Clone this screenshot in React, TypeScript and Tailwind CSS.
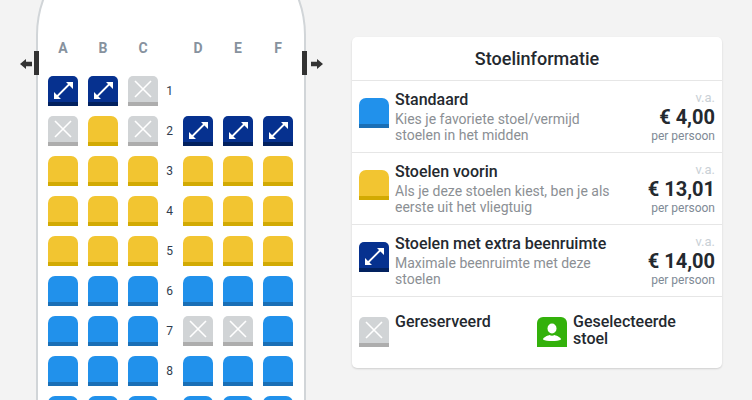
type SeatKind = "blue" | "yellow" | "navy" | "taken" | "selected" | "none";

const B: SeatKind = "blue";
const Y: SeatKind = "yellow";
const N: SeatKind = "navy";
const X: SeatKind = "taken";
const E: SeatKind = "none";

const rows: SeatKind[][] = [
  [N, N, X, E, E, E],
  [X, Y, X, N, N, N],
  [Y, Y, Y, Y, Y, Y],
  [Y, Y, Y, Y, Y, Y],
  [Y, Y, Y, Y, Y, Y],
  [B, B, B, B, B, B],
  [B, B, B, X, X, B],
  [B, B, B, B, B, B],
  [B, B, B, B, B, B],
];

function StretchIcon() {
  return (
    <svg viewBox="0 0 30 26" className="h-[26px] w-[30px]" fill="none">
      <path d="M9 20.500 21.500 8" stroke="#fff" strokeWidth="1.800" />
      <path d="M18 6h7v7z M6 16v7h7z" fill="#fff" />
    </svg>
  );
}

function CrossIcon() {
  return (
    <svg viewBox="0 0 30 26" className="h-[26px] w-[30px]" fill="none">
      <path d="M7 5 23 21M23 5 7 21" stroke="#fff" strokeWidth="1.600" />
    </svg>
  );
}

function PersonIcon() {
  return (
    <svg viewBox="0 0 30 30" className="h-[30px] w-[30px]" fill="#fff">
      <ellipse cx="15" cy="11.500" rx="4.500" ry="5" />
      <path d="M6 22.500c0-2 3.500-3.500 6.500-4.500 1.500 1 3.500 1 5 0 3 1 6.500 2.500 6.500 4.500-2 1-5 1.500-9 1.500s-7-.5-9-1.500z" />
    </svg>
  );
}

function Seat({ kind }: { kind: SeatKind }) {
  if (kind === "none") return <div className="h-[30px] w-[30px]" />;
  if (kind === "selected") {
    return (
      <div className="h-[30px] w-[30px] shrink-0 overflow-hidden rounded-t-[6px] bg-[#33b10b]">
        <PersonIcon />
      </div>
    );
  }
  if (kind === "blue") {
    return <div className="h-[30px] w-[30px] shrink-0 rounded-t-[7px] border-b-4 border-[#1a6fb6] bg-[#2191eb]" />;
  }
  if (kind === "yellow") {
    return <div className="h-[30px] w-[30px] shrink-0 rounded-t-[7px] border-b-4 border-[#d2aa03] bg-[#f2c531]" />;
  }
  if (kind === "navy") {
    return (
      <div className="h-[30px] w-[30px] shrink-0 overflow-hidden rounded-t-[5px] border-b-4 border-[#02215f] bg-[#06318f]">
        <StretchIcon />
      </div>
    );
  }
  return (
    <div className="h-[30px] w-[30px] shrink-0 overflow-hidden rounded-t-[5px] border-b-4 border-[#adadad] bg-[#d1d4d6]">
      <CrossIcon />
    </div>
  );
}

function ExitMark({ side }: { side: "left" | "right" }) {
  const left = side === "left";
  return (
    <div className={`absolute top-[119px] flex items-center ${left ? "-left-[18px] flex-row" : "-right-[19px] flex-row-reverse"}`}>
      <svg viewBox="0 0 12 12" className={`mt-[2px] h-[12px] w-[12px] ${left ? "" : "rotate-180"}`} fill="#333">
        <path d="M0 6 6 1V3.800h6v4.400H6V11z" />
      </svg>
      <div className={`h-[24px] w-[5px] bg-[#333] ${left ? "ml-[2px]" : "mr-[4px]"}`} />
    </div>
  );
}

function Fuselage() {
  return (
    <div className="relative ml-[36px] -mt-[70px] h-[600px] w-[270px] shrink-0 rounded-t-[105px] border-2 border-[#d1d5d8] bg-white pt-[106px] pl-[10px]">
      <ExitMark side="left" />
      <ExitMark side="right" />
      <div className="mb-[18px] flex text-[14px] font-bold leading-[20px] text-[#87929e]">
        <div className="flex gap-[10px] text-center">
          <span className="w-[30px]">A</span>
          <span className="w-[30px]">B</span>
          <span className="w-[30px]">C</span>
        </div>
        <div className="w-[25px]" />
        <div className="flex gap-[10px] text-center">
          <span className="w-[30px]">D</span>
          <span className="w-[30px]">E</span>
          <span className="w-[30px]">F</span>
        </div>
      </div>
      <div className="flex flex-col gap-[10px]">
        {rows.map((row, i) => (
          <div key={i} className="flex">
            <div className="flex gap-[10px]">
              {row.slice(0, 3).map((s, j) => (
                <Seat key={j} kind={s} />
              ))}
            </div>
            <div className="w-[25px] pr-[2px] text-center text-[12px] leading-[30px] text-[#2f3c4e]">
              {i < 8 ? i + 1 : ""}
            </div>
            <div className="flex gap-[10px]">
              {row.slice(3).map((s, j) => (
                <Seat key={j} kind={s} />
              ))}
            </div>
          </div>
        ))}
      </div>
    </div>
  );
}

function InfoRow({ kind, name, desc, price }: { kind: SeatKind; name: string; desc: string; price: string }) {
  return (
    <div className="flex h-[72px] border-t border-[#e6e6e6] pl-[7px] pr-[7px]">
      <div className="mt-[17px]">
        <Seat kind={kind} />
      </div>
      <div className="ml-[6px] w-[225px] pt-[9px]">
        <div className="text-[16px] font-medium leading-[20px] text-[#24292f]">{name}</div>
        <div className="mt-[1px] text-[14px] leading-[16px] text-[#8b8f94]">{desc}</div>
      </div>
      <div className="ml-auto pt-[9px] text-right">
        <div className="text-[13px] leading-[15px] text-[#c9d0d6]">v.a.</div>
        <div className="text-[20px] font-bold leading-[24px] text-[#24292f]">{price}</div>
        <div className="text-[12px] leading-[14px] text-[#7f8a96]">per persoon</div>
      </div>
    </div>
  );
}

export default function App() {
  return (
    <div className="flex h-[400px] w-[752px] items-start overflow-hidden bg-[#f3f3f3] font-['Roboto',sans-serif]">
      <Fuselage />
      <div className="ml-[46px] mt-[37px] w-[370px] rounded-[5px] bg-white shadow-[0_1px_2px_rgba(0,0,0,0.15)]">
        <div className="h-[43px] text-center text-[18px] font-medium leading-[43px] text-[#24292f]">Stoelinformatie</div>
        <InfoRow
          kind="blue"
          name="Standaard"
          desc="Kies je favoriete stoel/vermijd stoelen in het midden"
          price="€ 4,00"
        />
        <InfoRow
          kind="yellow"
          name="Stoelen voorin"
          desc="Als je deze stoelen kiest, ben je als eerste uit het vliegtuig"
          price="€ 13,01"
        />
        <InfoRow
          kind="navy"
          name="Stoelen met extra beenruimte"
          desc="Maximale beenruimte met deze stoelen"
          price="€ 14,00"
        />
        <div className="flex h-[72px] border-t border-[#e6e6e6] pl-[7px] pt-[20px]">
          <div className="flex w-[178px]">
            <Seat kind="taken" />
            <div className="ml-[6px] -mt-[4px] text-[16px] font-medium leading-[17px] text-[#24292f]">Gereserveerd</div>
          </div>
          <div className="flex">
            <Seat kind="selected" />
            <div className="ml-[6px] -mt-[4px] w-[120px] text-[16px] font-medium leading-[17px] text-[#24292f]">Geselecteerde stoel</div>
          </div>
        </div>
      </div>
    </div>
  );
}
